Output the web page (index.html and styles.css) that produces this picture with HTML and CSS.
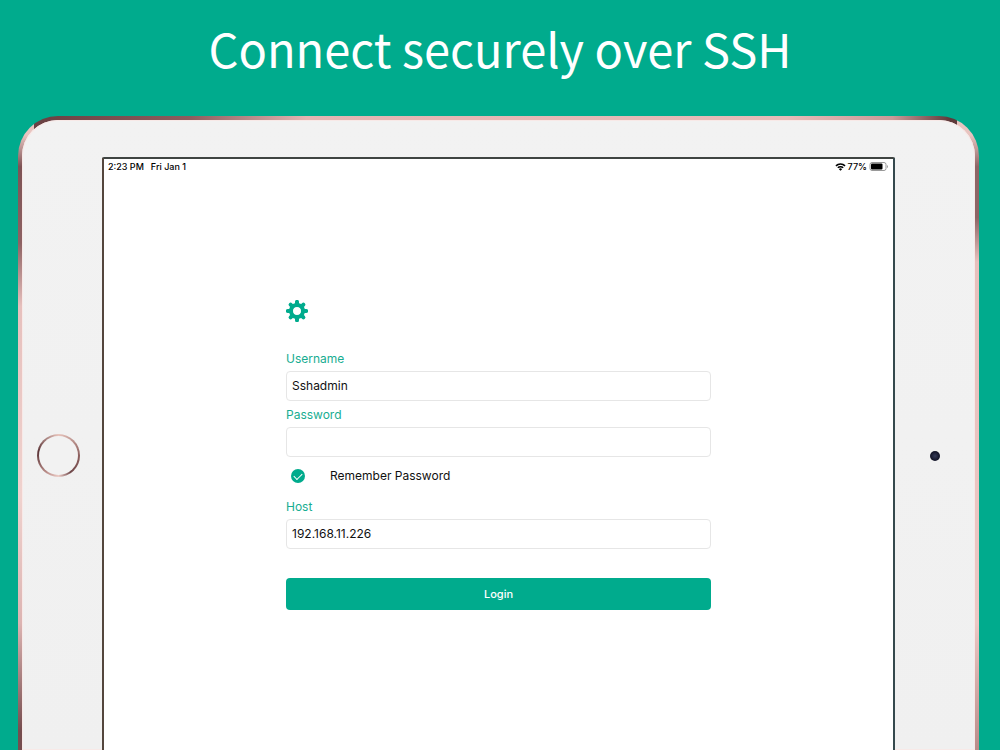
FILE: index.html
```html
<!DOCTYPE html>
<html lang="en">

<head>
    <meta charset="UTF-8">
    <meta name="viewport" content="width=device-width, initial-scale=1.0">
    <title>Connect securely over SSH</title>
    <link rel="stylesheet" href="styles.css">
</head>

<body>
    <h1 class="headline">Connect securely over SSH</h1>
    <div class="tablet">
        <div class="bezel">
            <span class="home-button"></span>
        </div>
        <main class="screen">
            <div class="status-bar">
                <span>2:23 PM</span>
                <span>Fri Jan 1</span>
                <div class="status-right">
                    <svg class="wifi" viewBox="0 0 20 15" aria-hidden="true">
                        <path d="M1.5 5.5a12 12 0 0 1 17 0" />
                        <path d="M5 9a7 7 0 0 1 10 0" />
                        <path class="wifi-dot" d="M10 14.5l-3-3a4.3 4.3 0 0 1 6 0z" />
                    </svg>
                    <span>77%</span>
                    <svg class="battery" viewBox="0 0 38 18" aria-hidden="true">
                        <rect class="battery-case" x="1" y="1" width="32" height="16" rx="4" />
                        <rect x="3" y="3" width="23" height="12" rx="2" />
                        <path class="battery-tip" d="M35 6v6q2-1 2-3t-2-3z" />
                    </svg>
                </div>
            </div>
            <form class="login">
                <!-- settings -->
                <button type="button" class="settings" aria-label="Settings">
                    <svg viewBox="0 0 22 22" aria-hidden="true">
                        <circle cx="11" cy="11" r="6" />
                        <path d="M11 1.8v3M11 17.2v3M1.8 11h3M17.2 11h3" />
                        <path d="M4.6 4.6l2 2M15.4 15.4l2 2M4.6 17.4l2-2M15.4 6.6l2-2" />
                    </svg>
                </button>
                <label class="field-label" for="username">Username</label>
                <input class="field" type="text" id="username" value="Sshadmin">
                <label class="field-label" for="password">Password</label>
                <input class="field" type="password" id="password">
                <div class="remember">
                    <input type="checkbox" id="remember" checked>
                    <label for="remember">Remember Password</label>
                </div>
                <label class="field-label" for="host">Host</label>
                <input class="field" type="text" id="host" value="192.168.11.226">
                <button type="submit" class="login-btn">Login</button>
            </form>
        </main>
        <div class="bezel">
            <span class="camera"></span>
        </div>
    </div>
</body>

</html>
```

FILE: styles.css
```css
* {
    box-sizing: border-box;
}

body {
    margin: 0;
    height: 100vh;
    display: flex;
    flex-direction: column;
    overflow: hidden;
    background-color: #00ab8d;
    font-family: Inter, "Liberation Sans", sans-serif;
    color: #111;
}

.headline {
    margin: 0;
    height: 116px;
    padding-top: 12px;
    text-align: center;
    font-family: "Noto Sans CJK SC", "Open Sans", sans-serif;
    font-size: 47px;
    line-height: 72px;
    font-weight: 400;
    color: #fff;
}

.tablet {
    flex: 1;
    display: grid;
    grid-template-columns: 80px 1fr 80px;
    margin: 0 21px 0 18px;
    padding-top: 37px;
    border: 4px solid transparent;
    border-bottom: 0;
    border-radius: 40px 40px 0 0;
    /* face, then the left, right and top edges */
    background: linear-gradient(#f2f2f2, #f0f0f0) padding-box,
        linear-gradient(#e8c4c0 3%, #7d5355 8%, #8d6263 20%, #e6c0bd 30%, #efd2ce 60%, #dcb4b2 80%, #754d4f 97%) 0 0 / 16px 100% no-repeat border-box,
        linear-gradient(#e8c4c0 3%, #8d6566 8%, #8d6566 16%, #e6c0bd 23%, #ecc8c5 80%, #b98c8a) 100% 0 / 22px 100% no-repeat border-box,
        linear-gradient(90deg, #6b4244 3%, #8d5d5e 18%, #e3b5b2 30%, #e6bcb8 80%, #c99a98 91%, #5e3a3b 97%) border-box;
    box-shadow: inset 0 0 0 1px #f8e9e7;
}

.bezel {
    display: flex;
    justify-content: center;
    align-items: flex-start;
    padding-top: 277px;
}

.home-button {
    width: 43px;
    height: 43px;
    margin-right: 8px;
    border: 2px solid transparent;
    border-radius: 50%;
    background: linear-gradient(#f2f2f2, #f2f2f2) padding-box,
        conic-gradient(#e8c4bc, #8d605e 25%, #70484a 40%, #ecccc6 50%, #b98c88 60%, #5b3437 78%, #e8c4bc) border-box;
}

.camera {
    width: 10px;
    height: 10px;
    margin-top: 17px;
    border-radius: 50%;
    background: radial-gradient(#343a58, #15172b 60%);
}

.screen {
    border: 2px solid #54463d;
    border-top-color: #3f4442;
    border-right-color: #35494d;
    border-bottom: 0;
    border-radius: 2px 2px 0 0;
    background-color: #fff;
}

.status-bar {
    display: flex;
    align-items: center;
    gap: 7px;
    padding: 0 4px;
    font-size: 9px;
    font-weight: 500;
    line-height: 15px;
    color: #000;
}

.status-right {
    display: flex;
    align-items: center;
    gap: 2px;
    margin-left: auto;
}

.wifi {
    width: 11px;
    height: 8px;
    fill: none;
    stroke: #000;
    stroke-width: 3;
}

.wifi-dot {
    fill: #000;
    stroke: none;
}

.battery {
    width: 20px;
    height: 9px;
}

.battery-case {
    fill: none;
    stroke: #999;
    stroke-width: 2;
}

.battery-tip {
    fill: #999;
}

.login {
    display: flex;
    flex-direction: column;
    width: 54%;
    max-width: 425px;
    margin: 125px auto 0;
}

.settings {
    align-self: flex-start;
    height: 24px;
    margin-bottom: 26px;
    padding: 0;
    border: 0;
    background: none;
}

.settings svg {
    display: block;
    width: 22px;
    height: 22px;
    fill: none;
    stroke: #00ab8d;
    stroke-width: 4;
    stroke-linecap: round;
}

.field-label {
    font-size: 12px;
    line-height: 20px;
    color: #18ad91;
}

.field {
    height: 30px;
    margin: 2px 0 4px;
    padding: 0 5px 1px;
    border: 1px solid #e6e6e6;
    border-radius: 4px;
    background-color: #fff;
    font-family: inherit;
    font-size: 12px;
    color: #111;
}

.remember {
    display: flex;
    align-items: center;
    gap: 25px;
    margin: 5px 0 11px 5px;
    font-size: 12px;
    line-height: 20px;
}

.remember input {
    appearance: none;
    width: 14px;
    height: 14px;
    margin: 0;
    border-radius: 50%;
    background-color: #00ab8d;
    display: grid;
    place-items: center;
}

.remember input:checked::after {
    content: "";
    width: 7px;
    height: 4px;
    margin-bottom: 2px;
    border: solid #fff;
    border-width: 0 0 1px 1px;
    transform: rotate(-45deg);
}

.login-btn {
    height: 32px;
    margin-top: 25px;
    border: 0;
    border-radius: 4px;
    background-color: #00ab8d;
    font-family: inherit;
    font-size: 11px;
    font-weight: 500;
    color: #fff;
}
```
